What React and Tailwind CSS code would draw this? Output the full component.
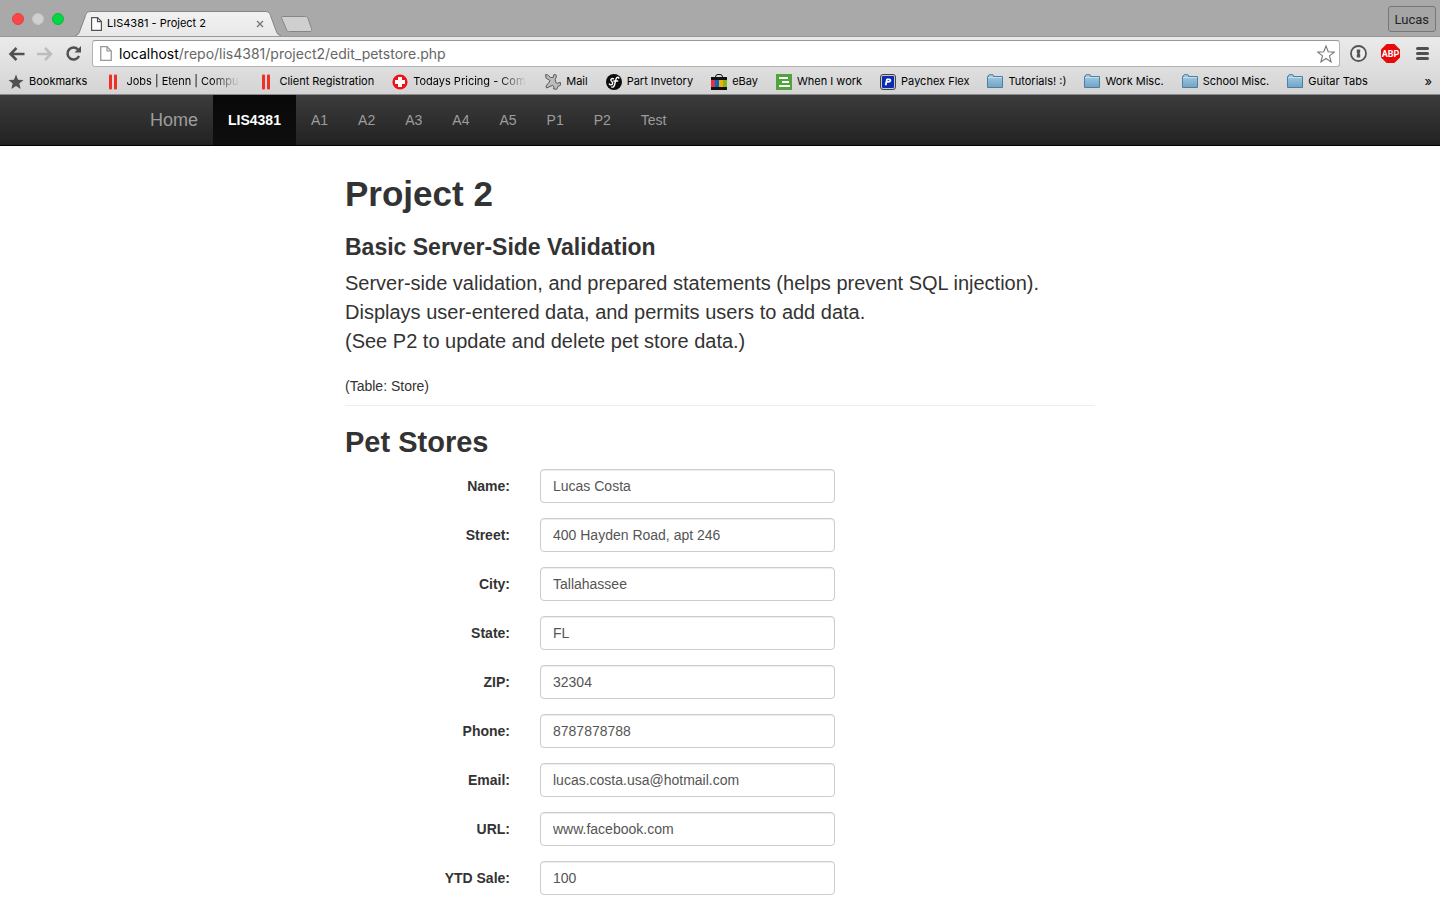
import React from "react";

const iconClass = "h-4 w-4 shrink-0";

function StarIcon() {
  return (
    <svg className={iconClass} viewBox="0 0 16 16" aria-hidden="true">
      <path d="M8 .6l2 5.1 5.5.4-4.2 3.5 1.4 5.4L8 12l-4.7 3 1.4-5.4L.5 6.1 6 5.7z" fill="#505050" />
    </svg>
  );
}

function BarsMark() {
  return (
    <svg className={iconClass} viewBox="0 0 16 16" aria-hidden="true">
      <rect x="4" y="0.5" width="3" height="15" rx="1" fill="#ee3124" />
      <rect x="9" y="0.5" width="3" height="15" rx="1" fill="#ee3124" />
    </svg>
  );
}

function CrossIcon() {
  return (
    <svg className={iconClass} viewBox="0 0 16 16" aria-hidden="true">
      <circle cx="8" cy="8" r="7.6" fill="#ef1216" />
      <path d="M6 3h4v3h3v4h-3v3H6v-3H3V6h3z" fill="#fff" />
    </svg>
  );
}

function MailIcon() {
  return (
    <svg className={iconClass} viewBox="0 0 16 16" aria-hidden="true">
      <path
        d="M.6.600l2 .2L5.500 3.500h2.700l.6-2.800h2l.7 1.600-1.300 3.200.6 3 1.700.8 2.800-.9.400 2.600-2.900 1.500-1 2.700-3.300-.2.500-2-1.300-1.700L1.500 14 1 12l3-3.500 1-2L1 4z"
        fill="#bcbcbc"
        stroke="#5a5a5a"
        strokeLinejoin="round"
      />
    </svg>
  );
}

function PartIcon() {
  return (
    <svg className={iconClass} viewBox="0 0 16 16" aria-hidden="true">
      <circle cx="8" cy="8" r="8" fill="#0c0c0c" />
      <path
        d="M7.600 4.800C6 4 4.400 5.200 5 6.500c.5 1 2 1.500 1.700 3-.3 1.600-2.900 1.900-3.300.5M12.800 4.200c-.2-1.500-2.200-1.200-2.800.8L8.700 10.500c-.5 2-1.500 3-2.900 2.500M7.800 7h3.900"
        fill="none"
        stroke="#fff"
        strokeWidth="1.4"
        strokeLinecap="round"
      />
    </svg>
  );
}

function BagIcon() {
  return (
    <svg className={iconClass} viewBox="0 0 16 16" aria-hidden="true">
      <path d="M4.500 4.500V3a2.500 2.500 0 0 1 2.500-2.500h2A2.500 2.500 0 0 1 11.500 3v1.500" fill="none" stroke="#111" />
      <rect y="3" width="16" height="3" fill="#111" />
      <rect y="6" width="4" height="7" fill="#e53238" />
      <rect x="4" y="6" width="4" height="7" fill="#0064d2" />
      <rect x="8" y="6" width="4" height="7" fill="#f5af02" />
      <rect x="12" y="6" width="4" height="7" fill="#86b817" />
      <rect y="13" width="16" height="3" fill="#111" />
    </svg>
  );
}

function WorkIcon() {
  return (
    <svg className={iconClass} viewBox="0 0 16 16" aria-hidden="true">
      <rect width="16" height="16" fill="#51a33d" />
      <path d="M3 3h9v2H3zM6 7h7v2H6zM3 11h11v2H3z" fill="#fff" />
    </svg>
  );
}

function PaychexIcon() {
  return (
    <svg className={iconClass} viewBox="0 0 16 16" aria-hidden="true">
      <rect x="0.500" y="0.500" width="15" height="15" rx="2.500" fill="#c8c8c8" stroke="#444" />
      <rect x="2" y="2" width="12" height="12" rx="1" fill="#0a2bb8" />
      <path d="M6.700 5.300h2.600c1.700 0 1.400 2.600-.8 2.600H6.300M7 5l-1.300 6.300" fill="none" stroke="#fff" strokeWidth="1.800" />
    </svg>
  );
}

function FolderIcon() {
  return (
    <svg className={iconClass} viewBox="0 0 16 16" aria-hidden="true">
      <defs>
        <linearGradient id="folder" x1="0" y1="0" x2="0" y2="1">
          <stop offset="0" stopColor="#a9cde3" />
          <stop offset="1" stopColor="#6fa3c7" />
        </linearGradient>
      </defs>
      <path d="M.5 13.500v-11H1.500V1.200L2 .7h4l.5.5v1.300h9v11z" fill="url(#folder)" stroke="#4f7f9f" />
      <path d="M1 3.500h14" stroke="#c5dfee" />
    </svg>
  );
}

function PageIcon({ stroke, className }) {
  return (
    <svg className={className} viewBox="0 0 11 14" aria-hidden="true">
      <path d="M.6.600h5.900l3.900 4v8.800H.6z" fill="#fff" stroke={stroke} strokeWidth="1.200" />
      <path d="M6.500.600v4h3.900" fill="none" stroke={stroke} strokeWidth="1.200" />
    </svg>
  );
}

const bookmarks = [
  { label: "Bookmarks", Icon: StarIcon },
  { label: "Jobs | Etenn | Compu", Icon: BarsMark, faded: true },
  { label: "Client Registration", Icon: BarsMark },
  { label: "Todays Pricing - Com", Icon: CrossIcon, faded: true },
  { label: "Mail", Icon: MailIcon },
  { label: "Part Invetory", Icon: PartIcon },
  { label: "eBay", Icon: BagIcon },
  { label: "When I work", Icon: WorkIcon },
  { label: "Paychex Flex", Icon: PaychexIcon },
  { label: "Tutorials! :)", Icon: FolderIcon },
  { label: "Work Misc.", Icon: FolderIcon },
  { label: "School Misc.", Icon: FolderIcon },
  { label: "Guitar Tabs", Icon: FolderIcon },
];

function TabStrip() {
  return (
    <div className="flex h-9 items-end bg-[#a9a9a9] pr-1">
      <div className="flex h-9 w-[75px] shrink-0 items-center gap-2 pl-3 pt-[2px]">
        <button aria-label="Close" className="h-3 w-3 rounded-full border border-[#e2403c] bg-[#fc4645]" />
        <button aria-label="Minimize" className="h-3 w-3 rounded-full border border-[#c4c4c4] bg-[#d0d0d0]" />
        <button aria-label="Zoom" className="h-3 w-3 rounded-full border border-[#12b938] bg-[#05d643]" />
      </div>
      <div className="relative h-[25px] w-[206px] shrink-0">
        <svg className="absolute inset-0 h-full w-full" viewBox="0 0 206 25" aria-hidden="true">
          <defs>
            <linearGradient id="tab" x1="0" y1="0" x2="0" y2="1">
              <stop offset="0" stopColor="#f2f2f2" />
              <stop offset="1" stopColor="#e8e8e8" />
            </linearGradient>
          </defs>
          <path
            d="M0 25c3-.5 4-2 5-5l5-14c1.200-4 2.500-5.500 6-5.500h174c3.500 0 4.800 1.500 6 5.500l5 14c1 3 2 4.500 5 5z"
            fill="url(#tab)"
          />
          <path
            d="M0 24.500c3-.5 4-2 5-5l5-13.500c1.200-4 2.500-5.500 6-5.500h174c3.500 0 4.800 1.500 6 5.500l5 13.500c1 3 2 4.500 5 5"
            fill="none"
            stroke="#858585"
          />
        </svg>
        <div className="relative flex h-full items-center pl-4 pr-[15px]">
          <PageIcon stroke="#555" className="h-[14px] w-[11px] shrink-0" />
          <span className="ml-[5px] flex-1 whitespace-nowrap text-[11px] text-black">LIS4381 - Project 2</span>
          <button aria-label="Close tab" className="p-[2px]">
            <svg className="h-2 w-2" viewBox="0 0 8 8" aria-hidden="true">
              <path d="M1 1l6 6M7 1L1 7" stroke="#777" strokeWidth="1.400" />
            </svg>
          </button>
        </div>
      </div>
      <button aria-label="New tab" className="mb-1 shrink-0">
        <svg className="h-4 w-8" viewBox="0 0 32 16" aria-hidden="true">
          <path
            d="M2 .5h22.500c1.500 0 2 .5 2.500 2l3.500 10c.5 2 .2 3-1.500 3H8.500c-1.800 0-2.500-.6-3-2L.7 2.500C.2 1 .5.500 2 .5z"
            fill="#cfcfcf"
            stroke="#868686"
          />
        </svg>
      </button>
      <button className="mb-1 ml-auto h-[26px] rounded-[3px] border border-[#777] bg-[#a5a5a5] px-[6px] pt-[2px] font-['Roboto',sans-serif] text-[13px] leading-5 text-[#222]">
        Lucas
      </button>
    </div>
  );
}

function Toolbar() {
  return (
    <div className="flex h-[33px] items-center border-t border-[#989898] pl-2 pr-[11px] pt-px">
      <button aria-label="Back" className="mr-3">
        <svg className="h-4 w-[17px]" viewBox="0 0 17 16" aria-hidden="true">
          <path d="M16.500 8H3M8.500 2L2.500 8l6 6" fill="none" stroke="#505050" strokeWidth="2.500" />
        </svg>
      </button>
      <button aria-label="Forward" className="mr-3">
        <svg className="h-4 w-4" viewBox="0 0 16 16" aria-hidden="true">
          <path d="M0 8h13.500M8 2l6 6-6 6" fill="none" stroke="#bdbdbd" strokeWidth="2.500" />
        </svg>
      </button>
      <button aria-label="Reload" className="mr-[10px]">
        <svg className="h-[17px] w-[17px]" viewBox="0 0 17 17" aria-hidden="true">
          <path d="M13 4.500A6 6 0 1 0 14 11" fill="none" stroke="#505050" strokeWidth="2.500" />
          <path d="M16 1v6.500H9.500z" fill="#505050" />
        </svg>
      </button>
      <div className="flex h-[27px] min-w-0 flex-1 items-center rounded-[3px] border border-[#b4b4b4] border-t-[#989898] bg-white pl-[7px] pr-1">
        <PageIcon stroke="#999" className="h-[15px] w-3 shrink-0" />
        <div className="relative ml-[7px] h-5 flex-1 text-sm leading-5">
          <div className="pointer-events-none absolute inset-0 whitespace-nowrap text-[#666]" aria-hidden="true">
            <span className="text-black">localhost</span>/repo/lis4381/project2/edit_petstore.php
          </div>
          <input
            aria-label="Address"
            className="h-5 w-full bg-transparent text-transparent caret-black outline-none"
            defaultValue="localhost/repo/lis4381/project2/edit_petstore.php"
          />
        </div>
        <button aria-label="Bookmark this page">
          <svg className="h-[18px] w-[18px]" viewBox="0 0 18 18" aria-hidden="true">
            <path
              d="M9 1l2.200 5.800 6 .3-4.700 3.800 1.600 6L9 13.500l-5.100 3.400 1.600-6L.8 7.100l6-.3z"
              fill="#fff"
              stroke="#777"
              strokeWidth="1.100"
            />
          </svg>
        </button>
      </div>
      <button aria-label="Password manager" className="ml-[10px]">
        <svg className="h-[17px] w-[17px]" viewBox="0 0 17 17" aria-hidden="true">
          <circle cx="8.500" cy="8.500" r="7.500" fill="#eee" stroke="#555" strokeWidth="1.800" />
          <path d="M6.800 4.500h3.400v3l-.8.8.8.800v3.400H6.800v-3l.8-.8-.8-.800z" fill="#555" />
        </svg>
      </button>
      <button aria-label="Ad blocker" className="ml-[14px]">
        <svg className="h-[19px] w-[19px]" viewBox="0 0 19 19" aria-hidden="true">
          <path d="M5.600 0h7.800L19 5.600v7.800L13.400 19H5.600L0 13.400V5.600z" fill="#e80a0a" />
          <text x="9.500" y="13" textAnchor="middle" fontSize="9" fontWeight="700" fontFamily="Roboto, sans-serif" fill="#fff">
            ABP
          </text>
        </svg>
      </button>
      <button aria-label="Menu" className="ml-4">
        <svg className="h-[13px] w-[13px]" viewBox="0 0 13 13" aria-hidden="true">
          <path d="M1.500 1.500h10M1.500 6.500h10M1.500 11.500h10" stroke="#505050" strokeWidth="3" strokeLinecap="round" />
        </svg>
      </button>
    </div>
  );
}

function BookmarksBar() {
  return (
    <nav aria-label="Bookmarks" className="flex h-[25px] items-center gap-[18px] px-2 text-[11px] text-black">
      {bookmarks.map(({ label, Icon, faded }) => (
        <a key={label} href="#" className="flex shrink-0 items-center gap-[5px] whitespace-nowrap">
          <Icon />
          {faded ? (
            <span className="w-[114px] [mask-image:linear-gradient(to_right,black_75%,transparent)]">{label}</span>
          ) : (
            <span>{label}</span>
          )}
        </a>
      ))}
      <button aria-label="More bookmarks" className="ml-auto text-[13px]">
        »
      </button>
    </nav>
  );
}

const navItems = ["A1", "A2", "A3", "A4", "A5", "P1", "P2", "Test"];

function SiteNav() {
  return (
    <nav className="border-b border-black bg-linear-to-b from-[#3c3c3c] to-[#222]">
      <div className="mx-auto flex h-[50px] max-w-[1170px] text-sm text-[#9d9d9d]">
        <a href="#" className="flex items-center px-[15px] text-lg">
          Home
        </a>
        <a href="#" className="flex items-center bg-linear-to-b from-[#080808] to-[#0f0f0f] px-[15px] font-bold text-white">
          LIS4381
        </a>
        {navItems.map((item) => (
          <a key={item} href="#" className="flex items-center px-[15px]">
            {item}
          </a>
        ))}
      </div>
    </nav>
  );
}

const fields = [
  ["name", "Name:", "Lucas Costa"],
  ["street", "Street:", "400 Hayden Road, apt 246"],
  ["city", "City:", "Tallahassee"],
  ["state", "State:", "FL"],
  ["zip", "ZIP:", "32304"],
  ["phone", "Phone:", "8787878788"],
  ["email", "Email:", "lucas.costa.usa@hotmail.com"],
  ["url", "URL:", "www.facebook.com"],
  ["ytd", "YTD Sale:", "100"],
];

export default function App() {
  return (
    <div className="bg-white font-['Liberation_Sans',Arial,sans-serif] text-[#333]">
      <header className="font-['Inter',sans-serif]">
        <TabStrip />
        <div className="border-b border-[#8a8a8a] bg-linear-to-b from-[#ebebeb] to-[#d4d4d4]">
          <Toolbar />
          <BookmarksBar />
        </div>
      </header>
      <SiteNav />
      <main className="mx-auto max-w-[750px] pt-7">
        <h1 className="text-[35px] font-bold leading-10">Project 2</h1>
        <h3 className="mt-5 text-[23px] font-bold leading-[26px]">Basic Server-Side Validation</h3>
        <p className="mt-[9px] text-xl leading-[29px]">
          Server-side validation, and prepared statements (helps prevent SQL injection).
          <br />
          Displays user-entered data, and permits users to add data.
          <br />
          (See P2 to update and delete pet store data.)
        </p>
        <p className="mt-5 text-sm">(Table: Store)</p>
        <hr className="mt-[9px] border-[#eee]" />
        <h2 className="mt-5 text-[29px] font-bold leading-[33px]">Pet Stores</h2>
        <form className="mt-[10px] flex flex-col gap-[15px] pb-[5px] text-sm">
          {fields.map(([id, label, value]) => (
            <div key={id} className="flex items-center gap-[30px]">
              <label htmlFor={id} className="w-[165px] text-right font-bold">
                {label}
              </label>
              <input
                id={id}
                name={id}
                defaultValue={value}
                className="h-[34px] w-[295px] rounded border border-[#ccc] bg-white px-3 text-[#555] shadow-[inset_0_1px_1px_rgba(0,0,0,0.075)]"
              />
            </div>
          ))}
        </form>
      </main>
    </div>
  );
}
